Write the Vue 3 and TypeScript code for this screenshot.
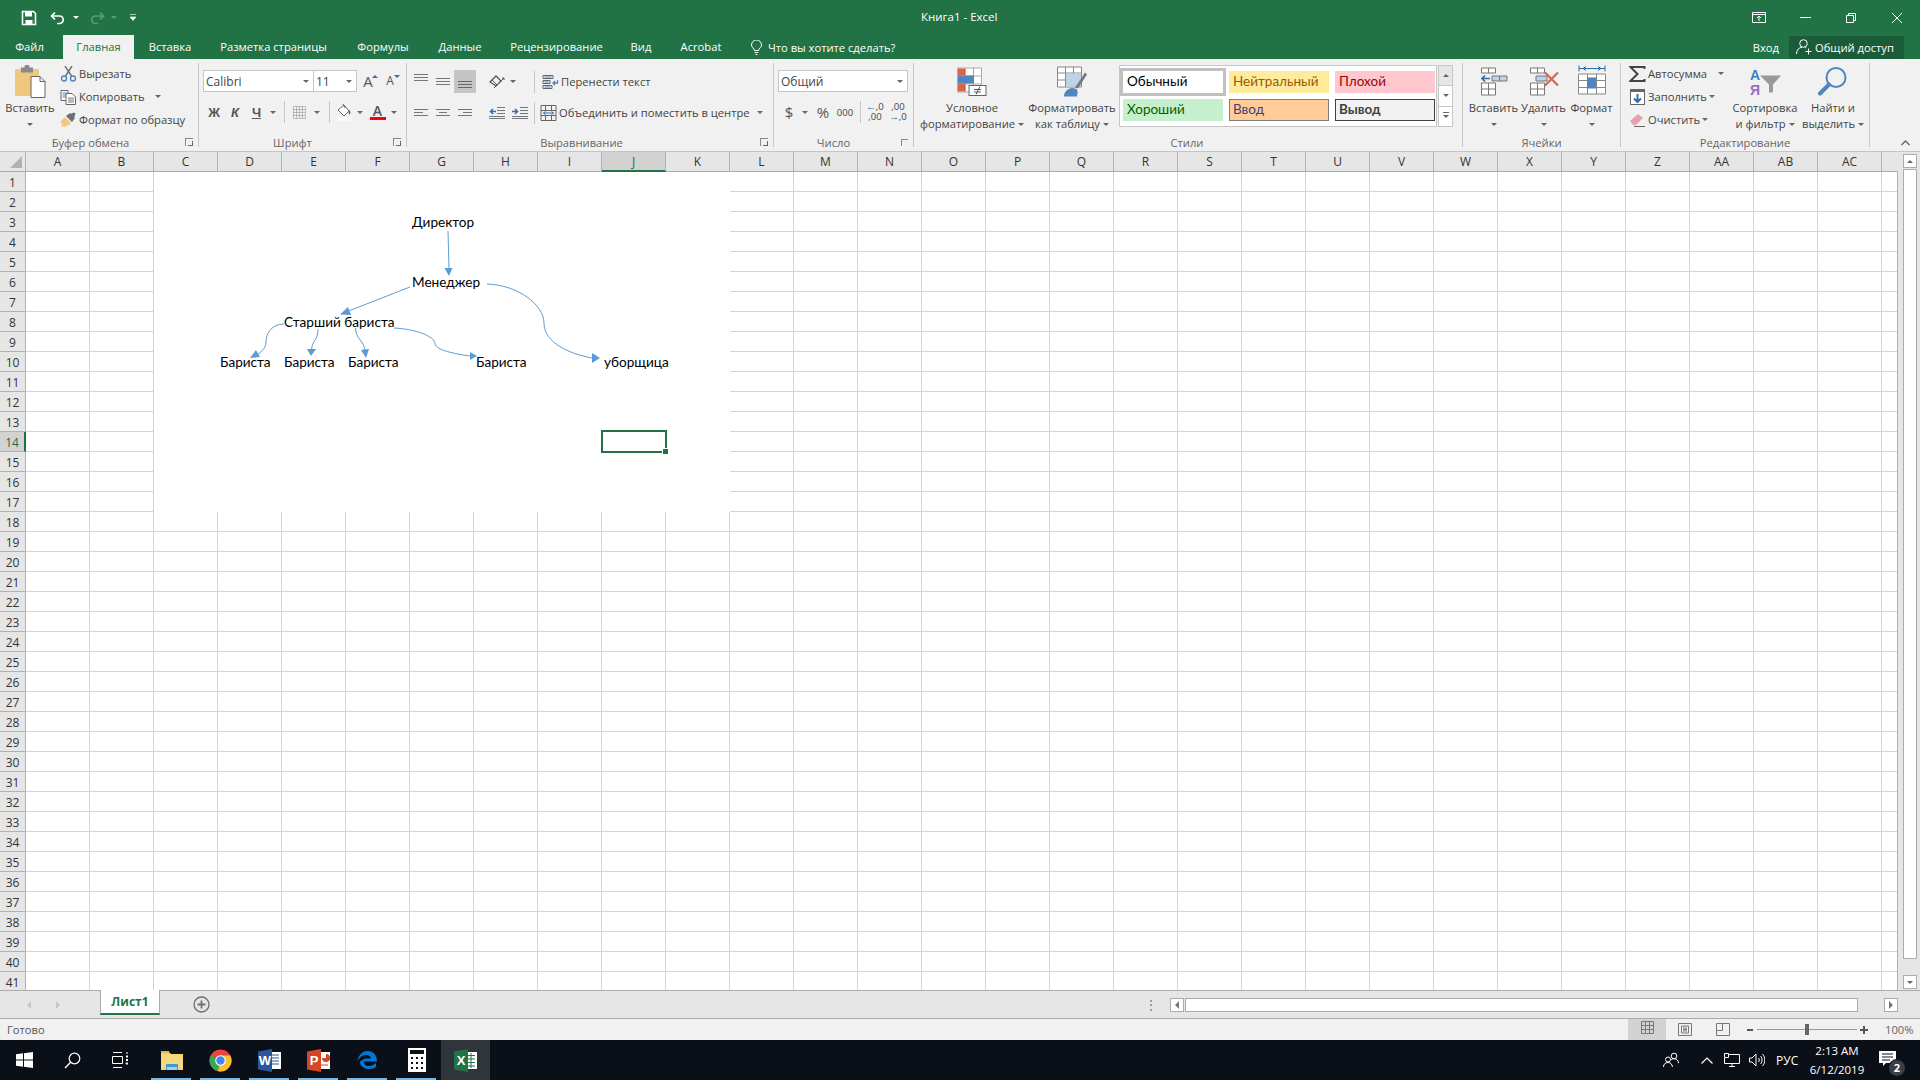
<script setup lang="ts">
const columns: string[] = 'A B C D E F G H I J K L M N O P Q R S T U V W X Y Z AA AB AC'.split(' ')
const rows: number[] = Array.from({ length: 41 }, (_, i) => i + 1)
const tabs = [
  { label: 'Файл', cls: 't-file' },
  { label: 'Главная', cls: 't-home' },
  { label: 'Вставка', cls: 't-ins' },
  { label: 'Разметка страницы', cls: 't-page' },
  { label: 'Формулы', cls: 't-form' },
  { label: 'Данные', cls: 't-data' },
  { label: 'Рецензирование', cls: 't-rev' },
  { label: 'Вид', cls: 't-view' },
  { label: 'Acrobat', cls: 't-acro' }
]
const nodes = [
  { t: 'Директор', x: 412, y: 222 },
  { t: 'Менеджер', x: 412, y: 282 },
  { t: 'Старший бариста', x: 284, y: 322 },
  { t: 'Бариста', x: 220, y: 362 },
  { t: 'Бариста', x: 284, y: 362 },
  { t: 'Бариста', x: 348, y: 362 },
  { t: 'Бариста', x: 476, y: 362 },
  { t: 'уборщица', x: 604, y: 362 }
]
const nodeStyle = (n: { x: number; y: number }) => ({ left: n.x - 154 + 'px', top: n.y - 172 - 10 + 'px' })
const edges: string[] = [
  'M448 231 L449 268',
  'M410 287 L346 312',
  'M284 324 C272 324 266 333 266 342 C266 349 260 353 255 356',
  'M318 329 C318 341 312 340 311.500 350',
  'M355.500 328 C356 340 364 340 365 351',
  'M394 328 C415 329 435 336 435 344 C436 350 455 354 470 356',
  'M487 284 C518 285 544 305 544 323 C544 343 570 354 592 358'
]
const heads: string[] = [
  '444.500,268 452.500,268 449,276',
  '348,307 351,315 340,314.500',
  '250,358 256,350 260,357',
  '307,349 316,349 311,356',
  '361,350 369,349 366,358',
  '470,352 470,360 477,356',
  '592,353 592,363 600,358'
]
const taskLines: string[] = ['tl-a', 'tl-b', 'tl-c', 'tl-d', 'tl-e', 'tl-f']
</script>

<template>
  <div class="app">
    <header class="titlebar">
      <div class="qat">
        <svg class="q-save" width="16" height="16" viewBox="0 0 16 16"><path d="M1.500 1.500h11l2 2v11h-13z" fill="none" stroke="#fff" stroke-width="1.600"/><rect x="4" y="2" width="7" height="4.500" fill="#fff"/><rect x="4.500" y="10" width="7" height="4.500" fill="#fff"/></svg>
        <svg class="q-undo" width="16" height="14" viewBox="0 0 16 14"><path d="M5 1.500L1.500 5 5 8.500M2 5h7.500a3.500 3.500 0 0 1 0 7.500H7" fill="none" stroke="#fff" stroke-width="1.700"/></svg>
        <i class="mini white q-a1"></i>
        <svg class="q-redo" width="16" height="14" viewBox="0 0 16 14"><path d="M11 1.500L14.500 5 11 8.500M14 5H6.500a3.500 3.500 0 0 0 0 7.500H9" fill="none" stroke="#5d9a7a" stroke-width="1.700"/></svg>
        <i class="mini dim q-a2"></i>
        <svg class="q-more" width="6" height="7" viewBox="0 0 6 7"><path d="M0 .500h6M0 3h6L3 6.500z" fill="#fff" stroke="#fff" stroke-width=".6"/></svg>
      </div>
      <div class="doc-title">Книга1 - Excel</div>
      <div class="winbtns">
        <svg width="14" height="11" viewBox="0 0 14 11"><path d="M.5.500h13v10H.5zM.5 2.500h13M7 9V4.500M5 6l2-2 2 2" fill="none" stroke="#fff"/></svg>
        <svg width="11" height="1" viewBox="0 0 11 1"><path d="M0 .500h11" stroke="#fff"/></svg>
        <svg width="10" height="10" viewBox="0 0 10 10"><path d="M.5 2.500h7v7h-7zM2.500 2.500v-2h7v7h-2" fill="none" stroke="#fff"/></svg>
        <svg width="10" height="10" viewBox="0 0 10 10"><path d="M0 0l10 10M10 0L0 10" stroke="#fff"/></svg>
      </div>
    </header>

    <nav class="tabsbar">
      <span v-for="tab in tabs" :key="tab.label" class="tab" :class="tab.cls">{{ tab.label }}</span>
      <svg class="bulb" width="11" height="15" viewBox="0 0 11 15"><path d="M3.500 10.500C3 8 .5 7.500.5 5a5 5 0 0 1 10 0c0 2.500-2.500 3-3 5.500zM3.700 12.500h3.600M4.500 14.500h2" fill="none" stroke="#fff"/></svg>
      <span class="tell">Что вы хотите сделать?</span>
      <span class="login">Вход</span>
      <span class="share">
        <svg width="17" height="16" viewBox="0 0 17 16"><circle cx="7.500" cy="4.500" r="3.800" fill="none" stroke="#fff"/><path d="M.5 15c0-4 2.500-6.500 5.500-6.800M9 8.500l1 .4M12.500 9.500v6M9.500 12.500h6" fill="none" stroke="#fff"/></svg>
        Общий доступ
      </span>
    </nav>

    <section class="ribbon">
      <!-- Буфер обмена -->
      <div class="group g-clip">
        <div class="gbody">
          <div class="big b-paste">
            <svg class="bigicon" width="32" height="33" viewBox="0 0 32 33"><rect x="1" y="4" width="24" height="27" rx="1.500" fill="#edc87e"/><rect x="7" y="2.500" width="12" height="5" fill="#8a8a8a"/><rect x="10.500" y="0" width="5" height="4" rx="1.500" fill="#8a8a8a"/><path d="M17 11.500h9l5 5v16H17z" fill="#fff" stroke="#666"/><path d="M26 11.500v5h5" fill="none" stroke="#666"/></svg>
            <span class="bl">Вставить</span>
            <i class="caret"></i>
          </div>
          <div class="three">
            <div class="sm"><svg width="16" height="16" viewBox="0 0 16 16"><path d="M4.500 0l6.500 10M11.500 0L5 10" stroke="#6e6e6e" stroke-width="1.400"/><circle cx="3.500" cy="12.500" r="2.500" fill="none" stroke="#4f86bd" stroke-width="1.400"/><circle cx="12.500" cy="12.500" r="2.500" fill="none" stroke="#4f86bd" stroke-width="1.400"/></svg><span>Вырезать</span></div>
            <div class="sm"><svg width="16" height="16" viewBox="0 0 16 16"><path d="M.5 1.500h7v10h-7z" fill="#fff" stroke="#666"/><path d="M2 4h4M2 6h4M2 8h4" stroke="#4f86bd"/><path d="M5.500 4.500h6l3.500 3.500v7.500H5.500z" fill="#fff" stroke="#666"/><path d="M7.500 9h6M7.500 11h6M7.500 13h6" stroke="#777"/></svg><span>Копировать</span><i class="caret c-copy"></i></div>
            <div class="sm"><svg width="17" height="16" viewBox="0 0 17 16"><path d="M0 10l5-5 6 6-3 3-1-1-2 2.500-1.500-1.500-1 1-1-1 1-2z" fill="#edc87e"/><path d="M6 4l4-3 .8.800 3.400-1.300 1.300 1.300L14.200 5.200l.8.800-3 4z" fill="#6e6e6e"/></svg><span>Формат по образцу</span></div>
          </div>
        </div>
        <div class="glabel">Буфер обмена</div>
        <i class="launcher"></i>
      </div>

      <!-- Шрифт -->
      <div class="group g-font">
        <div class="gbody two">
          <div class="r-font1">
            <div class="combo"><span>Calibri</span><i class="caret"></i></div>
            <div class="combo c-size"><span>11</span><i class="caret"></i></div>
            <span class="grow-a">A<i class="up"></i></span>
            <span class="grow-a small">A<i class="down"></i></span>
          </div>
          <div class="r-font2 cells">
            <b class="fx">Ж</b>
            <b class="fx it">К</b>
            <b class="fx un">Ч</b>
            <i class="caret"></i>
            <i class="vsep"></i>
            <svg width="13" height="13" viewBox="0 0 13 13"><path d="M.5.500h12v12H.5zM6.500.500v12M.5 6.500h12M3.500.500v12M9.500.500v12M.5 3.500h12M.5 9.500h12" fill="none" stroke="#888" stroke-dasharray="1 1"/></svg>
            <i class="caret"></i>
            <i class="vsep"></i>
            <svg width="16" height="18" viewBox="0 0 16 18"><path d="M2 7l6-5 5 6-5 5z" fill="#fff" stroke="#666"/><path d="M7 1l2 4" stroke="#666"/><path d="M13 7c1.500 1.500 2 3 1 4s-2-1-1-4z" fill="#2f6ea8"/><rect y="14.500" width="16" height="3" fill="#fff"/></svg>
            <i class="caret"></i>
            <span class="acolor">A<i></i></span>
            <i class="caret"></i>
          </div>
        </div>
        <div class="glabel">Шрифт</div>
        <i class="launcher"></i>
      </div>

      <!-- Выравнивание -->
      <div class="group g-align">
        <div class="gbody two">
          <div class="r-al1 cells">
            <svg width="14" height="8" viewBox="0 0 14 8" class="a-top"><path d="M0 .500h14M0 3.500h14M0 6.500h14" stroke="#777"/></svg>
            <svg width="14" height="8" viewBox="0 0 14 8"><path d="M0 .500h14M0 3.500h14M0 6.500h14" stroke="#777"/></svg>
            <span class="on"><svg width="14" height="8" viewBox="0 0 14 8" class="a-bot"><path d="M0 .500h14M0 3.500h14M0 6.500h14" stroke="#666"/></svg></span>
            <i></i>
            <svg width="16" height="15" viewBox="0 0 16 15"><path d="M1 8l6-6 5 5-5 5z" fill="none" stroke="#555" stroke-width="1.300"/><path d="M3 6l5 5M5 14l10-10M13 4h2v2" fill="none" stroke="#555"/></svg>
            <i class="caret"></i>
            <i></i>
            <i class="vsep"></i>
            <div class="sm wide"><svg width="16" height="16" viewBox="0 0 16 16"><path d="M.5 1.500h10v3H.5zM.5 6.500h7v3H.5zM.5 11.500h9v3H.5z" fill="none" stroke="#666"/><path d="M2 3h7M2 8h4M2 13h6" stroke="#4f86bd"/><path d="M15 6v3h-4M12.500 7l-2 2 2 2" fill="none" stroke="#4f86bd" stroke-width="1.300"/></svg><span>Перенести текст</span></div>
          </div>
          <div class="r-al2 cells">
            <svg width="14" height="10" viewBox="0 0 14 10"><path d="M0 1.500h14M0 4.500h9M0 7.500h14" stroke="#777"/></svg>
            <svg width="14" height="10" viewBox="0 0 14 10"><path d="M0 1.500h14M3 4.500h8M0 7.500h14" stroke="#777"/></svg>
            <svg width="14" height="10" viewBox="0 0 14 10"><path d="M0 1.500h14M5 4.500h9M0 7.500h14" stroke="#777"/></svg>
            <i></i>
            <svg width="16" height="12" viewBox="0 0 16 12"><path d="M8 .5h8M8 3.500h8M8 6.500h8M0 9.500h16M0 11.500h16" stroke="#777"/><path d="M7 4.500H2M4 2L1.500 4.500 4 7" fill="none" stroke="#2f6ea8" stroke-width="1.500"/></svg>
            <svg width="16" height="12" viewBox="0 0 16 12"><path d="M8 .5h8M8 3.500h8M8 6.500h8M0 9.500h16M0 11.500h16" stroke="#777"/><path d="M0 4.500h5M3 2l2.500 2.500L3 7" fill="none" stroke="#2f6ea8" stroke-width="1.500"/></svg>
            <i class="vsep"></i>
            <div class="sm wide"><svg width="16" height="16" viewBox="0 0 16 16"><path d="M.5.500h15v15H.5zM.5 5.500h15M.5 10.500h15M5 .5v5M11 .5v5M5 10.500v5M11 10.500v5" fill="none" stroke="#666"/><path d="M3 8h10M3 8l2-1.500M3 8l2 1.500M13 8l-2-1.500M13 8l-2 1.500" fill="none" stroke="#2f6ea8"/></svg><span>Объединить и поместить в центре</span><i class="caret c-merge"></i></div>
          </div>
        </div>
        <div class="glabel">Выравнивание</div>
        <i class="launcher"></i>
      </div>

      <!-- Число -->
      <div class="group g-num">
        <div class="gbody two">
          <div class="combo c-num"><span>Общий</span><i class="caret"></i></div>
          <div class="r-num cells">
            <span class="dollar">$</span>
            <i class="caret"></i>
            <span class="pct">%</span>
            <span class="k000">000</span>
            <i class="vsep"></i>
            <span class="dec"><em class="blue">←</em>,0<br>,00</span>
            <i></i>
            <span class="dec">,00<br><em class="blue">→</em>,0</span>
          </div>
        </div>
        <div class="glabel">Число</div>
      </div>

      <!-- Стили -->
      <div class="group g-styles">
        <div class="gbody">
          <div class="big b-cond">
            <svg class="bigicon" width="30" height="30" viewBox="0 0 30 30"><path d="M.5 1.500h24v24H.5zM8.500 1.500v24M16.500 1.500v24M.5 9.500h24M.5 17.500h24" fill="#fff" stroke="#aaa"/><rect x="1" y="2" width="7" height="7" fill="#d8654a"/><rect x="1" y="9" width="16" height="8" fill="#4f86bd"/><rect x="1" y="17" width="7" height="8" fill="#d8654a"/><rect x="12" y="19" width="17" height="10" fill="#fff" stroke="#666"/><path d="M17 23h7M17 25.500h7M19 28l4-8" stroke="#555"/></svg>
            <span class="bl">Условное</span>
            <span class="bl">форматирование<i class="caret inl"></i></span>
          </div>
          <div class="big b-tbl">
            <svg class="bigicon" width="30" height="30" viewBox="0 0 30 30"><path d="M.5.500h24v20H.5zM.5 6.500h24M.5 13.500h24M8.500.500v20M16.500.500v20" fill="#fff" stroke="#888"/><rect x="9" y="7" width="15" height="13" fill="#bed2e8"/><path d="M18 21L28 6l2 2-9 14z" fill="#7a7a7a"/><path d="M7 30c0-6 6-10 11-8 3 1 3 3 2 8z" fill="#4f86bd"/></svg>
            <span class="bl">Форматировать</span>
            <span class="bl">как таблицу<i class="caret inl"></i></span>
          </div>
          <div class="gallery">
            <span class="st normal">Обычный</span>
            <span class="st neutral">Нейтральный</span>
            <span class="st bad">Плохой</span>
            <span class="st good">Хороший</span>
            <span class="st input">Ввод</span>
            <span class="st output">Вывод</span>
          </div>
          <div class="gscroll">
            <span class="gs-a"><i class="caret flip"></i></span>
            <span><i class="caret"></i></span>
            <span><i class="caret bar"></i></span>
          </div>
        </div>
        <div class="glabel">Стили</div>
      </div>

      <!-- Ячейки -->
      <div class="group g-cells">
        <div class="gbody">
          <div class="big b-c1">
            <svg class="bigicon" width="28" height="30" viewBox="0 0 28 30"><path d="M1.500 1.500h14v5h-14zM8.500 1.500v5M1.500 16.500h14v12h-14zM1.500 22.500h14M8.500 16.500v12" fill="#fff" stroke="#777"/><path d="M12 9.500h15v5H12zM19.500 9.500v5" fill="#bed2e8" stroke="#777"/><path d="M10 12H2M5 9l-3 3 3 3" fill="none" stroke="#2f6ea8" stroke-width="1.700"/></svg>
            <span class="bl">Вставить</span>
            <i class="caret"></i>
          </div>
          <div class="big b-c2">
            <svg class="bigicon" width="30" height="30" viewBox="0 0 30 30"><path d="M1.500 1.500h14v5h-14zM8.500 1.500v5M1.500 16.500h14v12h-14zM1.500 22.500h14M8.500 16.500v12" fill="#fff" stroke="#777"/><path d="M7 9.500h11v5H7z" fill="#bed2e8" stroke="#777"/><path d="M16 6l13 13M29 6L16 19" stroke="#d8654a" stroke-width="2.200"/></svg>
            <span class="bl">Удалить</span>
            <i class="caret"></i>
          </div>
          <div class="big b-c3">
            <svg class="bigicon" width="28" height="32" viewBox="0 0 28 32"><path d="M1 3h26M1 0v6M27 0v6M5 3l3-2M5 3l3 2M23 3l-3-2M23 3l-3 2" fill="none" stroke="#2f6ea8"/><path d="M.5 8.500h27v20H.5zM9.500 8.500v20M18.500 8.500v20M.5 15h27M.5 22h27" fill="#fff" stroke="#888"/><rect x="9" y="12" width="9" height="11" fill="#4f86bd"/></svg>
            <span class="bl">Формат</span>
            <i class="caret"></i>
          </div>
        </div>
        <div class="glabel">Ячейки</div>
      </div>

      <!-- Редактирование -->
      <div class="group g-edit">
        <div class="gbody">
          <div class="three t-edit">
            <div class="sm"><svg width="16" height="16" viewBox="0 0 16 16"><path d="M15 3V1H1l7 7-7 7h14v-2" fill="none" stroke="#444" stroke-width="2"/></svg><span>Автосумма</span><i class="caret c-sum"></i></div>
            <div class="sm"><svg width="15" height="16" viewBox="0 0 15 16"><rect x=".5" y=".5" width="14" height="15" fill="#fff" stroke="#666"/><rect width="15" height="3" fill="#666"/><path d="M7.500 5v8M4 9.500l3.500 3.500L11 9.500" fill="none" stroke="#2f6ea8" stroke-width="2"/></svg><span>Заполнить</span><i class="caret c-fill"></i></div>
            <div class="sm"><svg width="15" height="14" viewBox="0 0 15 14"><path d="M0 8l8-7 5 4-7 7H3z" fill="#e9a0ae"/><path d="M4 13.500h11" stroke="#666"/></svg><span>Очистить</span><i class="caret c-fill"></i></div>
          </div>
          <div class="big b-sort">
            <svg class="bigicon" width="32" height="30" viewBox="0 0 32 30"><path d="M11 9h21l-8 9v8h-4v-8z" fill="#999"/><text x="1" y="13" class="sort-a">А</text><text x="1" y="28" class="sort-b">Я</text></svg>
            <span class="bl">Сортировка</span>
            <span class="bl">и фильтр<i class="caret inl"></i></span>
          </div>
          <div class="big b-find">
            <svg class="bigicon" width="30" height="30" viewBox="0 0 30 30"><circle cx="18" cy="11" r="9.500" fill="none" stroke="#4f86bd" stroke-width="2"/><path d="M11 18L2 27" stroke="#4f86bd" stroke-width="4" stroke-linecap="round"/></svg>
            <span class="bl">Найти и</span>
            <span class="bl">выделить<i class="caret inl"></i></span>
          </div>
        </div>
        <div class="glabel">Редактирование</div>
      </div>
      <svg class="collapse" width="9" height="6" viewBox="0 0 9 6"><path d="M.5 5l4-4 4 4" fill="none" stroke="#666" stroke-width="1.400"/></svg>
    </section>

    <main class="sheet">
      <div class="sheetcol">
        <div class="colhead">
          <div class="corner"><i></i></div>
          <div v-for="c in columns" :key="c" class="ch" :class="{ active: c === 'J' }">{{ c }}</div>
        </div>
        <div class="sheetbody">
          <div class="rowhead">
            <div v-for="r in rows" :key="r" class="rh" :class="{ active: r === 14 }">{{ r }}</div>
          </div>
          <div class="gridcells">
            <div class="diagram">
              <svg class="lines" width="576" height="340" viewBox="154 172 576 340">
                <path v-for="(d, i) in edges" :key="i" :d="d" fill="none" stroke="#5b9bd5" stroke-width="1"/>
                <polygon v-for="(p, i) in heads" :key="i" :points="p" fill="#5b9bd5"/>
              </svg>
              <span v-for="(n, i) in nodes" :key="i" class="node" :style="nodeStyle(n)">{{ n.t }}</span>
            </div>
            <div class="selected"><i></i></div>
          </div>
        </div>
      </div>
      <div class="vscroll">
        <span class="sbtn"><i class="caret flip"></i></span>
        <span class="vthumb"></span>
        <span class="sbtn s-end"><i class="caret"></i></span>
      </div>
    </main>

    <div class="sheetbar">
      <i class="tri left"></i>
      <i class="tri right"></i>
      <span class="sheet-tab">Лист1</span>
      <svg class="add" width="17" height="17" viewBox="0 0 17 17"><circle cx="8.500" cy="8.500" r="7.500" fill="none" stroke="#6e6e6e" stroke-width="1.300"/><path d="M4.500 8.500h8M8.500 4.500v8" stroke="#6e6e6e" stroke-width="1.800"/></svg>
      <span class="dots">⋮</span>
      <div class="hscroll">
        <span class="sbtn"><i class="tri right-l"></i></span>
        <span class="hthumb"></span>
        <span class="sbtn s-end"><i class="tri right"></i></span>
      </div>
    </div>

    <footer class="status">
      <span class="ready">Готово</span>
      <div class="views">
        <span class="view on"><svg width="13" height="13" viewBox="0 0 13 13"><path d="M.5.500h12v12H.5zM4.500.500v12M8.500.500v12M.5 4.500h12M.5 8.500h12" fill="none" stroke="#777"/></svg></span>
        <span class="view"><svg width="14" height="13" viewBox="0 0 14 13"><path d="M.5.500h13v12H.5zM3.500 3h7v7h-7zM5 5h4M5 6.500h4M5 8h4" fill="none" stroke="#777"/></svg></span>
        <span class="view"><svg width="14" height="13" viewBox="0 0 14 13"><path d="M.5.500h13v12H.5zM.5 7.500h6V.5" fill="none" stroke="#777"/></svg></span>
      </div>
      <div class="zoom">
        <i class="zm"></i>
        <div class="slider"><i></i></div>
        <i class="zp"></i>
      </div>
      <span class="pct100">100%</span>
    </footer>

    <div class="taskbar">
      <div class="tb-left">
        <svg class="ti-win" width="17" height="16" viewBox="0 0 17 16"><path d="M0 2.300L7 1.300V7.500H0zM8 1.200L17 0V7.500H8zM0 8.500H7V14.700L0 13.700zM8 8.500H17V16L8 14.800z" fill="#fff"/></svg>
        <svg class="ti-search" width="17" height="17" viewBox="0 0 17 17"><circle cx="10.500" cy="6.500" r="5.300" fill="none" stroke="#fff" stroke-width="1.200"/><path d="M6.700 10.300L1 16" stroke="#fff" stroke-width="1.400"/></svg>
        <svg class="ti-view" width="16" height="16" viewBox="0 0 16 16"><path d="M1 .5h9M1 15.500h9M.5 4.500h10v7H.5z" fill="none" stroke="#fff"/><path d="M14 3.500h2v2h-2zM14 7h2v2h-2z" fill="#fff"/><path d="M14 11h2v1h-2zM14 1h2" stroke="#fff"/></svg>
        <svg class="ti-exp" width="22" height="20" viewBox="0 0 22 20"><path d="M0 2h8l2 2h12v16H0z" fill="#f4d472"/><path d="M0 1h8v2H0z" fill="#e4b94c"/><rect x="0" y="5" width="22" height="13" fill="#f6d97c"/><path d="M5 20v-6h12v6h-3v-3H8v3z" fill="#3a9bdc"/><rect x="6" y="17" width="10" height="3" fill="#9bd3f3"/></svg>
        <svg class="ti-chrome" width="23" height="23" viewBox="0 0 23 23"><circle cx="11.500" cy="11.500" r="11" fill="#e8453c"/><path d="M11.500 11.500L1.900 6.300A11 11 0 0 0 9 22.200z" fill="#34a853"/><path d="M11.500 11.500L9 22.200A11 11 0 0 0 21.300 6.500h-9.800z" fill="#fbc02d"/><circle cx="11.500" cy="11.500" r="5.300" fill="#fff"/><circle cx="11.500" cy="11.500" r="4.200" fill="#4285f4"/></svg>
        <svg class="ti-word" width="23" height="23" viewBox="0 0 23 23"><rect x="11" y="3" width="12" height="17" fill="#fff"/><path d="M14 6h7M14 9h7M14 12h7M14 15h7" stroke="#2b579a"/><path d="M0 2.500L14 0v23L0 20.500z" fill="#2b579a"/><text x="7" y="16" class="ti-l">W</text></svg>
        <svg class="ti-ppt" width="23" height="23" viewBox="0 0 23 23"><rect x="11" y="3" width="12" height="17" fill="#fff"/><path d="M15 9a4 4 0 1 0 4-4v4z" fill="#d24726"/><path d="M14 16h7" stroke="#d24726"/><path d="M0 2.500L14 0v23L0 20.500z" fill="#d24726"/><text x="7" y="16" class="ti-l">P</text></svg>
        <svg class="ti-edge" width="21" height="20" viewBox="0 0 21 20"><path d="M3 11.500h17C20 5 16 1 10.500 1 5 1 1 6 .5 11c2-4 5-6 8.500-6 3.500 0 5 2 5 3.500H8M3 11.500c0 5 5 8 10 7.500 2.500 0 4.500-1 6-2v-4c-3 2.500-5.500 3-7.500 3-3 0-5-2-5-4.500z" fill="#0078d7"/></svg>
        <svg class="ti-calc" width="18" height="24" viewBox="0 0 18 24"><rect width="18" height="24" fill="#fff"/><rect x="2" y="2" width="14" height="4" fill="#111"/><path d="M3 9h2v2H3zM8 9h2v2H8zM13 9h2v2h-2zM3 14h2v2H3zM8 14h2v2H8zM13 14h2v2h-2zM3 19h2v2H3zM8 19h2v2H8zM13 19h2v2h-2z" fill="#111"/></svg>
        <div class="ti-excel"><svg width="23" height="23" viewBox="0 0 23 23"><rect x="11" y="3" width="12" height="17" fill="#fff"/><path d="M14 6.500h7M14 10h7M14 13.500h7M14 17h7M17 4v15" stroke="#217346"/><path d="M0 2.500L14 0v23L0 20.500z" fill="#217346"/><text x="7" y="16" class="ti-l">X</text></svg></div>
        <i v-for="l in taskLines" :key="l" class="tline" :class="l"></i>
      </div>
      <div class="tb-right">
        <svg class="ri-p" width="16" height="16" viewBox="0 0 16 16"><circle cx="11" cy="4" r="2.800" fill="none" stroke="#fff"/><circle cx="5" cy="7.500" r="2.500" fill="none" stroke="#fff"/><path d="M.5 15c0-3 2-4.500 4.500-4.500S9 12 9.500 15M8 8c1-1 2-1.300 3-1.300 2.500 0 4.500 1.500 4.500 4.500" fill="none" stroke="#fff"/></svg>
        <svg class="ri-c" width="12" height="7" viewBox="0 0 12 7"><path d="M.5 6.500L6 1l5.500 5.500" fill="none" stroke="#fff" stroke-width="1.200"/></svg>
        <svg class="ri-n" width="16" height="14" viewBox="0 0 16 14"><path d="M3.500 1.500h12v9H.5V5M8 10.500v3M5 13.500h6" fill="none" stroke="#fff"/><path d="M.5.500h4v4h-4z" fill="#0b0f18" stroke="#fff"/></svg>
        <svg class="ri-v" width="16" height="14" viewBox="0 0 16 14"><path d="M.5 5h2.500l4-4v12l-4-4H.5zM9.500 5c1 1 1 3 0 4M11.500 3c2 2 2 6 0 8M13.500 1c3 3 3 9 0 12" fill="none" stroke="#fff"/></svg>
        <span class="lang">РУС</span>
        <span class="clock">2:13 AM<br>6/12/2019</span>
        <div class="notif">
          <svg width="17" height="16" viewBox="0 0 17 16"><path d="M0 0h17v12H7l-3 3v-3H0z" fill="#fff"/><path d="M3 3h11M3 6h11M3 9h8" stroke="#0b0f18"/></svg>
          <b>2</b>
        </div>
      </div>
    </div>
  </div>
</template>

<style scoped>
.app { width: 1920px; height: 1080px; display: flex; flex-direction: column; overflow: hidden; font-family: "Open Sans", "Noto Sans", sans-serif; font-size: 11.2px; color: #444; background: #f1f1f1; }
i { display: block; font-style: normal; }

.titlebar { height: 35px; flex: none; background: #217346; display: flex; align-items: center; position: relative; color: #fff; }
.qat { display: flex; align-items: center; padding-left: 21px; width: 400px; }
.q-undo { margin-left: 13px; }
.q-a1 { margin-left: 7px; }
.q-redo { margin-left: 10px; }
.q-a2 { margin-left: 6px; }
.q-more { margin-left: 13px; }
.mini { width: 0; height: 0; border-left: 3px solid transparent; border-right: 3px solid transparent; }
.mini.white { border-top: 3px solid #fff; }
.mini.dim { border-top: 3px solid #5d9a7a; }
.doc-title { position: absolute; left: 921px; top: 9px; font-size: 11.5px; }
.winbtns { margin-left: auto; display: grid; grid-template-columns: 46px 46px 46px 46px; justify-items: center; align-items: center; width: 184px; }

.tabsbar { height: 24px; flex: none; background: #217346; display: flex; align-items: center; color: #fff; position: relative; }
.tab { flex: none; height: 24px; line-height: 23px; text-align: center; }
.t-file { width: 63px; padding-right: 4px; box-sizing: border-box; }
.t-home { width: 71px; background: #f1f1f1; color: #217346; }
.t-ins { width: 72px; }
.t-page { width: 135px; }
.t-form { width: 84px; }
.t-data { width: 70px; }
.t-rev { width: 123px; }
.t-view { width: 46px; }
.t-acro { width: 74px; }
.bulb { margin-left: 13px; }
.tell { margin-left: 6px; }
.login { margin-left: auto; }
.share { width: 115px; height: 23px; margin: 0 16px 0 10px; background: #1a5c39; display: flex; align-items: center; gap: 2px; padding-left: 7px; box-sizing: border-box; white-space: nowrap; }

.ribbon { height: 93px; flex: none; box-sizing: border-box; border-bottom: 1px solid #c4c4c4; display: flex; position: relative; background: #f1f1f1; }
.group { position: relative; flex: none; display: flex; flex-direction: column; height: 84px; margin-top: 4px; border-right: 1px solid #c6c6c6; box-sizing: border-box; }
.gbody { height: 72px; display: flex; }
.glabel { position: absolute; left: 0; right: 0; top: 72px; text-align: center; color: #666; line-height: 16px; }
.launcher { position: absolute; right: 5px; bottom: 1px; width: 7px; height: 7px; border-left: 1px solid #888; border-top: 1px solid #888; }
.launcher::after { content: ""; display: block; width: 4px; height: 4px; margin: 2px 0 0 2px; border-right: 1px solid #666; border-bottom: 1px solid #666; }
.g-clip { width: 199px; }
.g-clip .glabel { right: 17px; }
.g-font { width: 208px; }
.g-font .glabel { right: 20px; }
.g-align { width: 367px; }
.g-align .glabel { right: 17px; }
.g-num { width: 140px; }
.g-num .glabel { right: 20px; }
.g-num::after { content: ""; position: absolute; right: 5px; bottom: 1px; width: 6px; height: 6px; border-left: 1px solid #888; border-top: 1px solid #888; }
.g-styles { width: 549px; }
.g-styles .glabel { right: 2px; }
.g-cells { width: 158px; }
.g-edit { width: 249px; }

.big { display: flex; flex-direction: column; align-items: center; flex: none; white-space: nowrap; }
.bigicon { margin-top: 2px; height: 33px; flex: none; }
.bl { line-height: 16px; height: 16px; display: flex; align-items: center; }
.big > .caret { margin-top: 7px; }
.bigicon + .bl { margin-top: 2px; }
.b-paste { width: 60px; }
.three { display: flex; flex-direction: column; margin-top: -1px; }
.sm { display: flex; align-items: center; height: 23px; white-space: nowrap; }
.sm > svg { width: 17px; flex: none; margin-right: 2px; }
.c-copy { margin-left: 10px; }
.c-merge { margin-left: 7px; }
.c-sum { margin-left: 11px; }
.c-fill { margin-left: 2px; }

.caret { width: 0; height: 0; flex: none; border-left: 3px solid transparent; border-right: 3px solid transparent; border-top: 3px solid #666; }
.caret.flip { border-top: 0; border-bottom: 3px solid #666; }
.caret.inl { display: inline-block; margin-left: 3px; }
.caret.bar { position: relative; }
.caret.bar::before { content: ""; position: absolute; left: -3px; top: -6px; width: 6px; height: 1px; background: #666; }

.two { flex-direction: column; padding-top: 7px; gap: 9px; box-sizing: border-box; }
.cells { display: grid; height: 22px; align-items: center; justify-items: center; }
.r-font1 { display: grid; grid-template-columns: 111px 43px 22px 22px; padding-left: 4px; height: 22px; align-items: center; }
.combo { height: 22px; box-sizing: border-box; border: 1px solid #c6c6c6; background: #fff; display: flex; align-items: center; justify-content: space-between; padding: 0 4px 0 2px; }
.combo span { font-size: 12px; }
.c-size { border-left: 0; }
.c-num { width: 130px; margin-left: 4px; }
.grow-a { position: relative; font-size: 15px; text-align: center; color: #555; line-height: 22px; }
.grow-a.small { font-size: 12px; }
.grow-a i { position: absolute; right: 1px; top: 5px; width: 0; border-left: 3px solid transparent; border-right: 3px solid transparent; }
.up { border-bottom: 3px solid #2f6ea8; }
.down { border-top: 3px solid #2f6ea8; }
.r-font2 { grid-template-columns: 22px 20px 23px 10px 13px 17px 17px 8px 22px 10px 25px 8px; margin-left: 4px; width: 200px; }
.fx { font-size: 13px; color: #555; font-family: "Liberation Sans", sans-serif; }
.fx.it { font-style: italic; }
.fx.un { text-decoration: underline; }
.vsep { width: 1px; height: 22px; background: #c6c6c6; }
.acolor { font-size: 14px; font-weight: 600; color: #555; line-height: 13px; text-align: center; }
.acolor i { width: 16px; height: 3px; background: #f00; }

.r-al1 { grid-template-columns: 22px 22px 22px 10px 22px 10px 11px 10px auto; padding-left: 3px; justify-content: start; }
.r-al2 { grid-template-columns: 22px 22px 22px 9px 23px 23px 6px auto; padding-left: 3px; justify-content: start; }
.on { width: 22px; height: 23px; background: #c5c5c5; display: flex; align-items: flex-end; justify-content: center; padding-bottom: 4px; box-sizing: border-box; }
.a-top { margin-bottom: 8px; }
.wide { justify-self: start; margin-left: 3px; }
.wide > svg { margin-right: 2px; }
.r-num { grid-template-columns: 22px 10px 26px 18px 12px 18px 2px 24px; margin-left: 4px; justify-content: start; }
.dollar { font-size: 15px; color: #555; }
.pct { font-size: 15px; color: #555; }
.k000 { font-size: 9.5px; }
.dec { font-size: 9.5px; line-height: 10px; text-align: center; white-space: nowrap; }
.blue { color: #2f6ea8; font-style: normal; font-weight: 700; }

.b-cond { width: 110px; margin-left: 3px; }
.b-tbl { width: 90px; }
.gallery { margin: 2px 0 0 2px; width: 318px; height: 62px; box-sizing: border-box; border: 1px solid #c6c6c6; background: #fff; padding: 5px 0 0 3px; display: grid; grid-template-columns: repeat(3, 100px); grid-template-rows: 22px 22px; column-gap: 6px; row-gap: 6px; }
.st { font-family: Lato, "Open Sans", sans-serif; font-size: 13.500px; line-height: 21px; padding-left: 4px; box-sizing: border-box; }
.normal { color: #000; outline: 3px solid #c0c0c0; }
.neutral { background: #ffeb9c; color: #9c5700; }
.bad { background: #ffc7ce; color: #9c0006; }
.good { background: #c6efce; color: #006100; }
.input { background: #ffcc99; color: #3f3f76; border: 1px solid #7f7f7f; padding-left: 3px; line-height: 19px; }
.output { background: #f2f2f2; color: #3f3f3f; border: 1px solid #3f3f3f; padding-left: 3px; line-height: 19px; font-weight: 700; }
.gscroll { margin: 2px 0 0 1px; width: 15px; height: 62px; display: flex; flex-direction: column; box-sizing: border-box; border: 1px solid #c6c6c6; background: #fff; }
.gscroll span { flex: 1; display: flex; align-items: center; justify-content: center; border-bottom: 1px solid #c6c6c6; }
.gscroll span:last-child { border-bottom: 0; }
.gscroll .gs-a { background: #e6e6e6; }

.g-cells .gbody { padding-left: 5px; }
.b-c1 { width: 51px; }
.b-c2 { width: 49px; }
.b-c3 { width: 47px; }
.t-edit { width: 101px; padding-left: 8px; box-sizing: content-box; }
.b-sort { width: 70px; }
.b-find { width: 60px; margin-left: 3px; }
.sort-a { font-family: "Liberation Sans", sans-serif; font-size: 14px; font-weight: 700; fill: #3f7fbf; }
.sort-b { font-family: "Liberation Sans", sans-serif; font-size: 14px; font-weight: 700; fill: #9b6fc0; }
.collapse { position: absolute; left: 1901px; top: 81px; }

.sheet { height: 838px; flex: none; display: flex; background: #fff; }
.sheetcol { width: 1898px; flex: none; display: flex; flex-direction: column; }
.colhead { height: 20px; flex: none; display: flex; background: #e6e6e6; box-sizing: border-box; border-bottom: 1px solid #ababab; }
.corner { width: 26px; flex: none; box-sizing: border-box; border-right: 1px solid #b1b1b1; position: relative; }
.corner i { position: absolute; right: 3px; bottom: 3px; width: 0; height: 0; border-left: 12px solid transparent; border-bottom: 12px solid #b1b1b1; }
.ch { width: 64px; flex: none; box-sizing: border-box; border-right: 1px solid #b1b1b1; text-align: center; line-height: 19px; font-size: 12px; color: #333; }
.ch.active { background: #d2d2d2; border-bottom: 2px solid #217346; height: 20px; line-height: 19px; color: #1f6a42; }
.sheetbody { flex: 1; display: flex; min-height: 0; }
.rowhead { width: 26px; flex: none; background: #e6e6e6; overflow: hidden; }
.rh { height: 20px; box-sizing: border-box; border-right: 1px solid #b1b1b1; border-bottom: 1px solid #b1b1b1; text-align: center; line-height: 21px; font-size: 12px; color: #333; }
.rh.active { background: #d2d2d2; border-right: 2px solid #217346; color: #1f6a42; }
.gridcells { flex: 1; position: relative; overflow: hidden; background-image: linear-gradient(to right, transparent 63px, #d4d4d4 63px), linear-gradient(to bottom, transparent 19px, #d4d4d4 19px); background-size: 64px 20px; border-right: 1px solid #b1b1b1; }
.diagram { position: absolute; left: 128px; top: 0; width: 576px; height: 340px; background: #fff; }
.lines { position: absolute; left: 0; top: 0; }
.node { position: absolute; font-family: Lato, "Open Sans", sans-serif; font-size: 13.600px; line-height: 20px; color: #000; white-space: nowrap; }
.selected { position: absolute; left: 575px; top: 258px; width: 66px; height: 23px; box-sizing: border-box; border: 2px solid #217346; }
.selected i { position: absolute; right: -4px; bottom: -4px; width: 5px; height: 5px; background: #217346; border: 1px solid #fff; box-sizing: content-box; }

.vscroll { flex: 1; background: #e6e6e6; padding: 2px 3px 0 5px; display: flex; flex-direction: column; gap: 1px; box-sizing: border-box; }
.sbtn { width: 14px; height: 14px; flex: none; box-sizing: border-box; border: 1px solid #ababab; background: #fff; display: flex; align-items: center; justify-content: center; }
.vthumb { height: 790px; flex: none; box-sizing: border-box; border: 1px solid #ababab; background: #fff; }
.s-end { margin-top: auto; margin-bottom: 1px; }

.sheetbar { height: 29px; flex: none; box-sizing: border-box; border-top: 1px solid #ababab; border-bottom: 1px solid #ababab; background: #e6e6e6; display: flex; align-items: center; position: relative; }
.tri { width: 0; height: 0; border-top: 4px solid transparent; border-bottom: 4px solid transparent; }
.tri.left { border-right: 4px solid #c4c4c4; margin-left: 27px; }
.tri.right { border-left: 4px solid #c4c4c4; margin-left: 25px; }
.sbtn .tri.right { border-left-color: #777; margin-left: 0; }
.tri.right-l { border-right: 4px solid #777; }
.sheet-tab { margin: -1px 0 0 40px; width: 60px; height: 25px; box-sizing: border-box; background: #fff; border-left: 1px solid #ababab; border-right: 1px solid #ababab; border-bottom: 2px solid #217346; text-align: center; font-weight: 700; font-size: 12px; color: #217346; line-height: 23px; align-self: flex-start; }
.add { margin-left: 33px; }
.dots { margin-left: auto; color: #777; font-size: 12px; }
.hscroll { display: flex; align-items: center; width: 728px; margin-left: 13px; margin-right: 22px; gap: 1px; }
.hthumb { width: 673px; height: 14px; box-sizing: border-box; border: 1px solid #ababab; background: #fff; }
.hscroll .s-end { margin: 0 0 0 auto; }

.status { height: 21px; flex: none; display: flex; align-items: center; background: #f1f1f1; color: #555; }
.ready { margin-left: 7px; }
.views { margin-left: auto; display: flex; }
.view { width: 38px; height: 21px; display: flex; align-items: center; justify-content: center; }
.view.on { background: #d2d2d2; }
.zoom { display: flex; align-items: center; margin-left: 5px; width: 121px; flex: none; }
.zm { width: 6px; height: 2px; background: #555; margin-right: 4px; }
.zp { width: 8px; height: 2px; background: #555; position: relative; margin-left: 3px; }
.zp::after { content: ""; position: absolute; left: 3px; top: -3px; width: 2px; height: 8px; background: #555; }
.slider { width: 100px; height: 1px; background: #999; position: relative; }
.slider i { position: absolute; left: 48px; top: -5px; width: 4px; height: 11px; background: #666; }
.pct100 { width: 35px; margin-left: 17px; color: #666; flex: none; }

.taskbar { height: 40px; flex: none; background: #0b0f18; display: flex; color: #fff; position: relative; }
.tb-left { position: relative; flex: 1; display: grid; grid-template-columns: 48px 48px 48px 3px repeat(7, 49px); justify-items: center; align-items: center; align-content: center; justify-content: start; height: 40px; }
.ti-excel { grid-column: 11; width: 49px; height: 40px; background: #30343b; display: flex; align-items: center; justify-content: center; }
.ti-exp { grid-column: 5; }
.ti-l { font-family: "Liberation Sans", sans-serif; font-size: 13px; font-weight: 700; fill: #fff; text-anchor: middle; }
.tline { position: absolute; bottom: 0; height: 2px; background: #76b9ed; width: 40px; }
.tl-a { left: 151px; }
.tl-b { left: 200px; }
.tl-c { left: 249px; }
.tl-d { left: 298px; }
.tl-e { left: 347px; }
.tl-f { left: 396px; }
.tb-right { display: flex; align-items: center; width: 262px; flex: none; }
.ri-p { margin-left: 5px; }
.ri-c { margin-left: 22px; }
.ri-n { margin-left: 11px; }
.ri-v { margin-left: 9px; }
.lang { margin-left: 11px; font-size: 12px; width: 32px; }
.clock { margin-left: -12px; width: 82px; text-align: center; font-size: 11.500px; line-height: 19px; }
.notif { position: relative; margin-left: 1px; }
.notif b { position: absolute; left: 9px; top: 8px; width: 16px; height: 16px; border-radius: 50%; background: #3a3f46; border: 1px solid #0b0f18; font-size: 11px; text-align: center; line-height: 16px; }
</style>

<style>
html, body { margin: 0; padding: 0; background: #f1f1f1; }
</style>
